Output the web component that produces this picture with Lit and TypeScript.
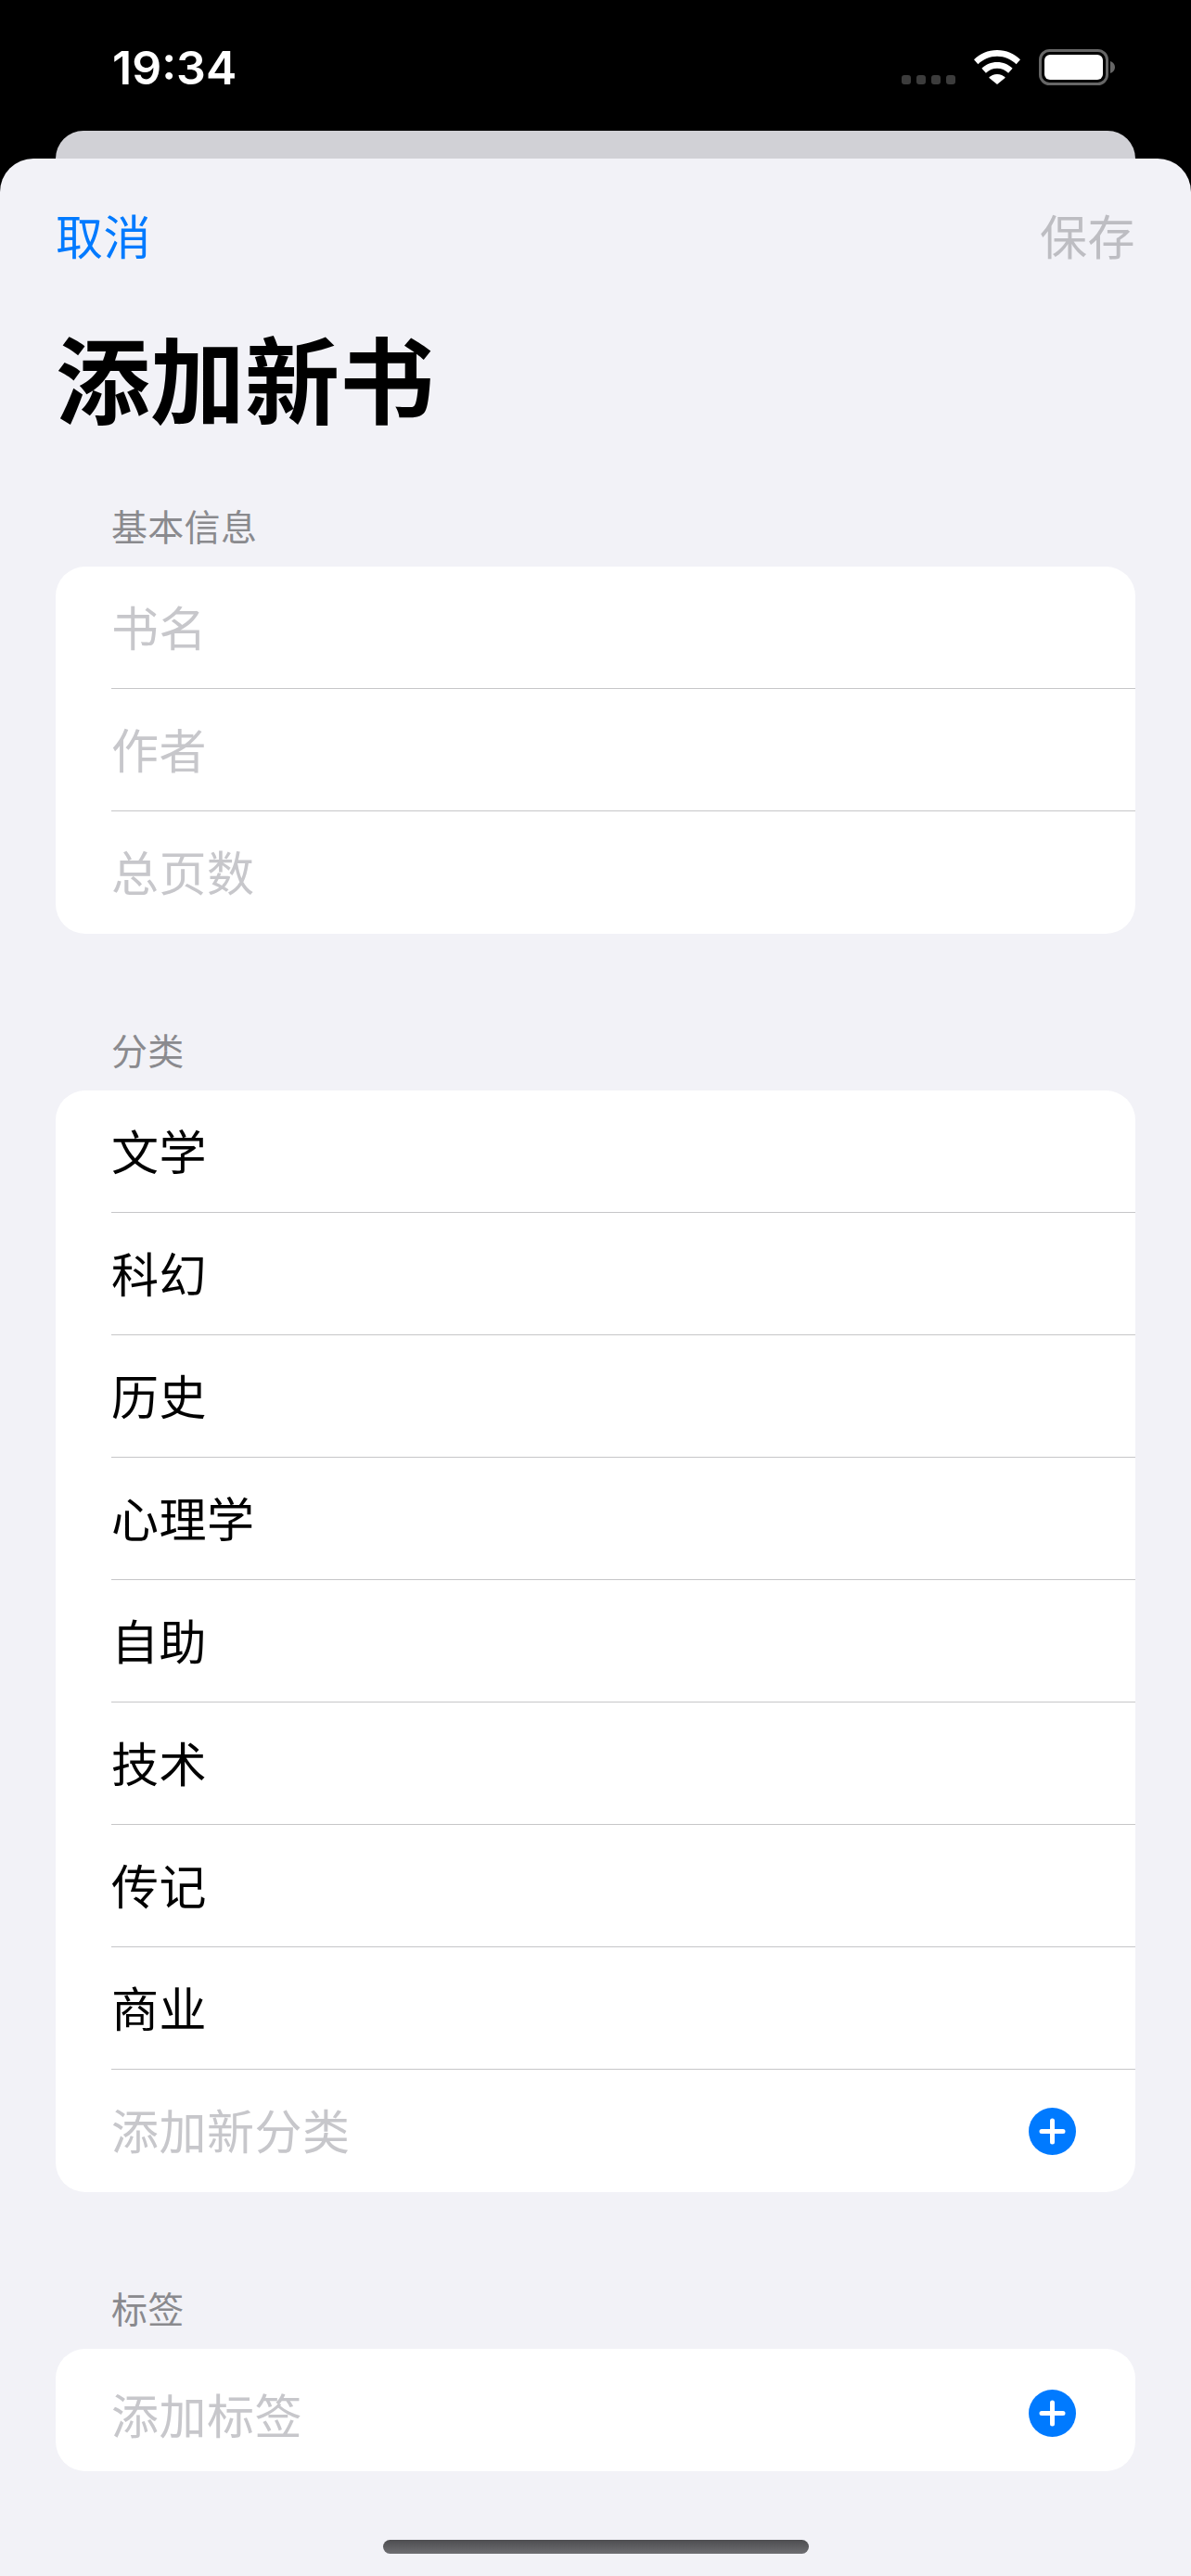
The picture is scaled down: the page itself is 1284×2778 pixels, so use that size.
import { LitElement, html, css } from "lit";
import { customElement } from "lit/decorators.js";

const plus = html`<svg class="plus" viewBox="0 0 51 51" aria-hidden="true">
  <circle cx="25.5" cy="25.5" r="25.5" fill="#007aff"></circle>
  <path d="M25.5 14v23M14 25.5h23" stroke="#fff" stroke-width="5" stroke-linecap="round" fill="none"></path>
</svg>`;

const categories = ["文学", "科幻", "历史", "心理学", "自助", "技术", "传记", "商业"];

@customElement("app-root")
export class AppRoot extends LitElement {
  static styles = css`
    :host {
      display: block;
      width: 1284px;
      height: 2778px;
      background: #000;
      overflow: hidden;
      font-family: "Noto Sans CJK SC", "Liberation Sans", sans-serif;
    }
    * { box-sizing: border-box; }
    .status {
      height: 141px;
      display: flex;
      align-items: flex-start;
      padding: 0 80px 0 121px;
      color: #fff;
    }
    .time {
      font-family: Inter, "Liberation Sans", sans-serif;
      font-size: 50px;
      font-weight: 600;
      line-height: 60px;
      margin-top: 43px;
    }
    .status-icons {
      margin-left: auto;
      display: flex;
      align-items: flex-start;
      padding-top: 53px;
    }
    .dots { display: flex; gap: 6px; margin-top: 28px; margin-right: 19px; }
    .dots i { width: 10px; height: 10px; border-radius: 3px; background: #3c3c3c; display: block; }
    .wifi { width: 52px; height: 38px; display: block; margin-right: 19px; }
    .battery { width: 84px; height: 40px; display: block; }
    .back {
      height: 30px;
      margin: 0 60px;
      background: #d1d1d6;
      border-radius: 36px 36px 0 0;
    }
    .sheet {
      height: 2607px;
      background: #f2f2f7;
      border-radius: 36px 36px 0 0;
      display: flex;
      flex-direction: column;
      padding: 0 60px;
    }
    .nav {
      display: flex;
      justify-content: space-between;
      font-size: 51px;
      line-height: 60px;
      letter-spacing: 0.5px;
      margin-top: 52px;
    }
    .cancel { color: #007aff; }
    .save { color: #bdbdc2; }
    h1 {
      margin: 63px 0 0;
      font-size: 102px;
      line-height: 120px;
      font-weight: 700;
      color: #000;
    }
    .label {
      font-size: 39px;
      line-height: 46px;
      letter-spacing: 0.3px;
      color: #8a8a8e;
      padding-left: 60px;
      margin-bottom: 22px;
    }
    .first { margin-top: 77px; }
    .next { margin-top: 101px; }
    .group {
      background: #fff;
      border-radius: 32px;
      overflow: hidden;
    }
    .row {
      height: 132px;
      margin-left: 60px;
      padding: 0 64px 4px 0;
      display: flex;
      align-items: center;
      justify-content: space-between;
      font-size: 51px;
      line-height: 60px;
      letter-spacing: 0.5px;
      color: #000;
      border-bottom: 1px solid #c6c6c8;
    }
    .row:last-child { border-bottom: 0; }
    .row .plus { margin-top: 4px; }
    .row.tag { padding: 7px 64px 0 0; }
    .row.tag .plus { margin-top: 0; }
    .ph { color: #c7c7cb; }
    .plus { width: 51px; height: 51px; display: block; }
    .home {
      width: 459px;
      height: 15px;
      border-radius: 8px;
      background: linear-gradient(#4d4d50, #6e6e72);
      align-self: center;
      margin-top: 74px;
    }
  `;

  render() {
    return html`
      <div class="status">
        <div class="time">19:34</div>
        <div class="status-icons">
          <div class="dots"><i></i><i></i><i></i><i></i></div>
          <svg class="wifi" viewBox="0 0 52 38" aria-hidden="true">
            <path fill="#fff" d="M26 1C16 1 7.500 4.800 1 11.200l4.400 5C11 11 18 7.800 26 7.800S41 11 46.600 16.200l4.400-5C44.500 4.800 36 1 26 1z"></path>
            <path fill="#fff" d="M26 14c-6.500 0-12.400 2.600-16.600 6.800l4.500 5C17 22.700 21.300 20.800 26 20.800s9 1.900 12.100 5l4.500-5C38.400 16.600 32.500 14 26 14z"></path>
            <path fill="#fff" d="M26 27c-3.500 0-6.800 1.400-8.900 3.700L26 38l8.900-7.300C32.800 28.400 29.500 27 26 27z"></path>
          </svg>
          <svg class="battery" viewBox="0 0 84 40" aria-hidden="true">
            <rect x="1.500" y="1.500" width="72" height="36" rx="10" fill="none" stroke="#666" stroke-width="3"></rect>
            <rect x="6" y="6" width="63" height="27" rx="6" fill="#fff"></rect>
            <path d="M77 13c3 .8 5 3.400 5 6.500S80 25.200 77 26z" fill="#666"></path>
          </svg>
        </div>
      </div>
      <div class="back"></div>
      <div class="sheet">
        <div class="nav"><span class="cancel">取消</span><span class="save">保存</span></div>
        <h1>添加新书</h1>
        <div class="label first">基本信息</div>
        <div class="group">
          <div class="row ph">书名</div>
          <div class="row ph">作者</div>
          <div class="row ph">总页数</div>
        </div>
        <div class="label next">分类</div>
        <div class="group">
          ${categories.map((c) => html`<div class="row">${c}</div>`)}
          <div class="row ph"><span>添加新分类</span>${plus}</div>
        </div>
        <div class="label next">标签</div>
        <div class="group">
          <div class="row ph tag"><span>添加标签</span>${plus}</div>
        </div>
        <div class="home"></div>
      </div>
    `;
  }
}
